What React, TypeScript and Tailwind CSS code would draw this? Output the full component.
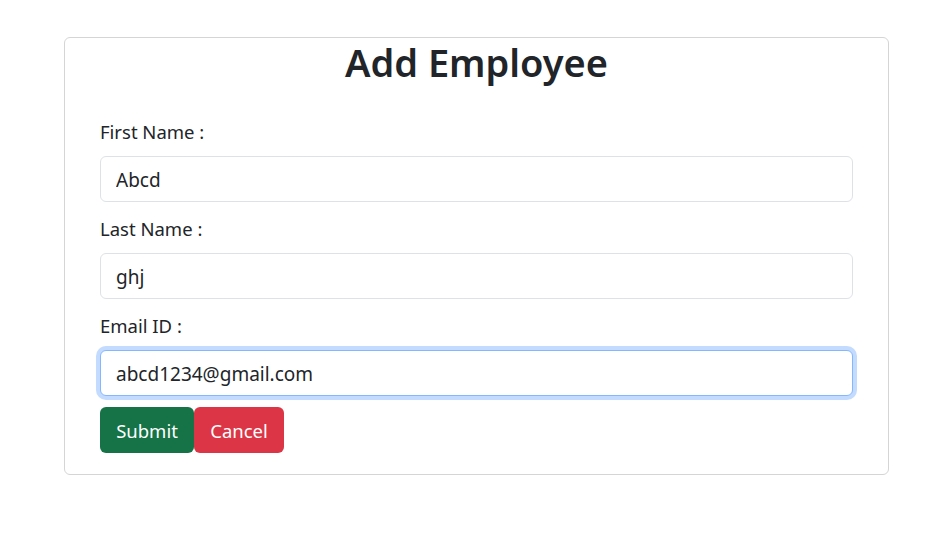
import { useState } from 'react';

type Field = {
  id: string;
  label: string;
  value: string;
  focused?: boolean;
};

const initialFields: Field[] = [
  { id: 'firstName', label: 'First Name :', value: 'Abcd' },
  { id: 'lastName', label: 'Last Name :', value: 'ghj' },
  { id: 'emailId', label: 'Email ID :', value: 'abcd1234@gmail.com', focused: true },
];

export default function App() {
  const [fields, setFields] = useState(initialFields);

  const update = (id: string, value: string) =>
    setFields((prev) => prev.map((f) => (f.id === id ? { ...f, value } : f)));

  return (
    <div
      className="min-h-[538px] bg-white pt-[37px] text-[#212529]"
      style={{ fontFamily: '"Noto Sans", "Open Sans", sans-serif' }}
    >
      <div className="ml-[64px] mr-[63px] rounded-md border border-[#d5d5d5] px-[35px] pb-[21px]">
        <h2 className="h-[48px] text-center text-[38px] font-semibold leading-[48px]">
          Add Employee
        </h2>
        <form className="mt-[34px]" onSubmit={(e) => e.preventDefault()}>
          {fields.map((f, i) => (
            <div
              key={f.id}
              className={i === fields.length - 1 ? 'mb-[11px]' : 'mb-[15px]'}
            >
              <label
                htmlFor={f.id}
                className="mb-3 block h-6 text-[18.5px] leading-6"
              >
                {f.label}
              </label>
              <input
                id={f.id}
                value={f.value}
                onChange={(e) => update(f.id, e.target.value)}
                className={`block h-[46px] w-full rounded-md border bg-white px-[15px] pt-px text-[19px] text-[#212529] outline-none ${
                  f.focused
                    ? 'border-[#86b7fe] shadow-[0_0_0_4px_rgba(13,110,253,0.25)]'
                    : 'border-[#dee2e6]'
                }`}
              />
            </div>
          ))}
          <div className="flex">
            <button
              type="submit"
              className="h-[46px] w-[94px] rounded-md bg-[#157347] pt-px text-[18.5px] text-white"
            >
              Submit
            </button>
            <button
              type="button"
              className="h-[46px] w-[90px] rounded-md bg-[#dc3545] pt-px text-[18.5px] text-white"
            >
              Cancel
            </button>
          </div>
        </form>
      </div>
    </div>
  );
}
